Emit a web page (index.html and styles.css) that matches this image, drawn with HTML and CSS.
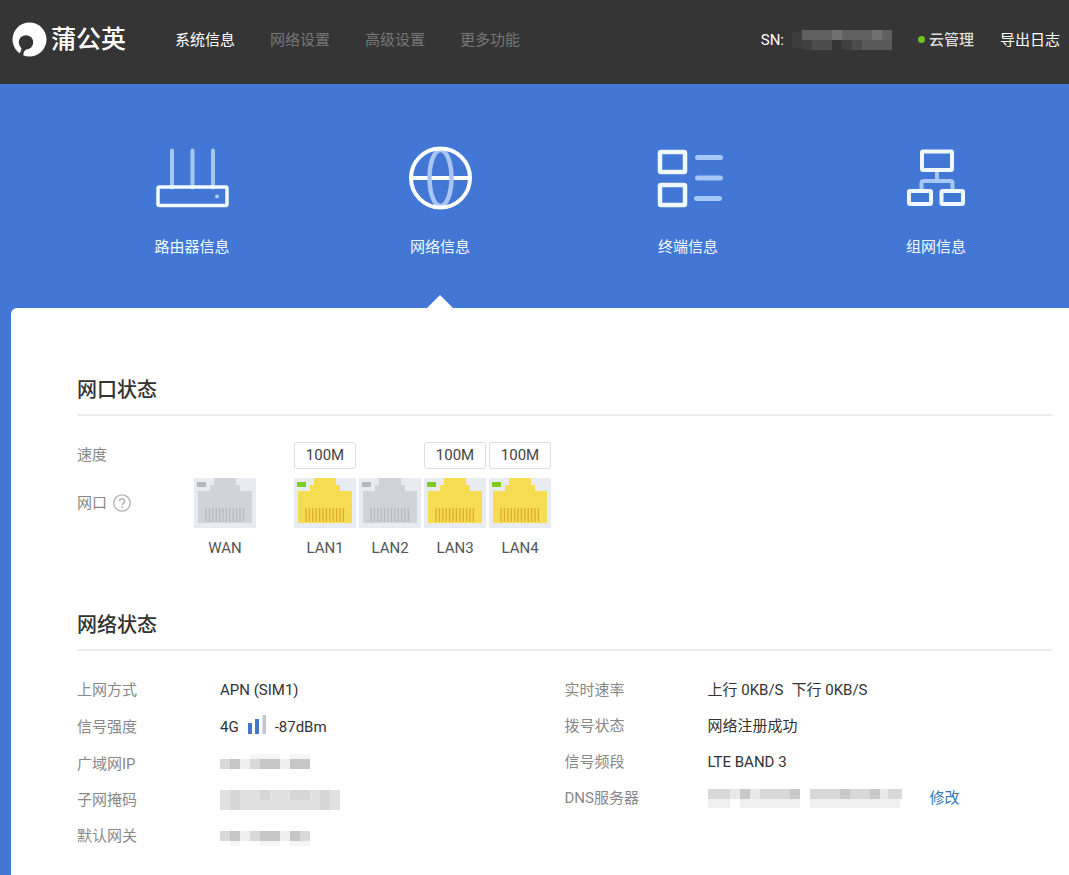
FILE: index.html
```html
<!DOCTYPE html>
<html lang="zh-CN">
<head>
<meta charset="utf-8">
<meta name="viewport" content="width=device-width, initial-scale=1">
<title>蒲公英</title>
<link rel="stylesheet" href="styles.css">
</head>
<body>
<header class="topbar">
  <a class="brand" href="#">
    <svg class="brand-mark" viewBox="0 0 34 34" aria-hidden="true">
      <circle cx="17" cy="17" r="16.5" fill="#fff"/>
      <circle cx="13.600" cy="19.800" r="7" fill="#353535"/>
      <path d="M9.500 24L14 26.500Q10.500 28.500 11 34L6 33Q9.500 28.500 9.500 24Z" fill="#353535"/>
    </svg>
    <span>蒲公英</span>
  </a>
  <nav class="menu">
    <a class="active" href="#">系统信息</a>
    <a href="#">网络设置</a>
    <a href="#">高级设置</a>
    <a href="#">更多功能</a>
  </nav>
  <div class="tools">
    <span class="serial">SN:
      <svg class="mosaic" width="100" height="20" viewBox="0 0 100 20" aria-hidden="true">
        <path d="M0 2h10v16H0z" fill="#3d3d3d"/>
        <path d="M10 10h10v10H10zM50 10h10v10H50z" fill="#404040"/>
        <path d="M10 0h90v10H10z" fill="#606060"/>
        <path d="M40 0h10v10H40zM80 0h10v10H80z" fill="#707070"/>
        <path d="M20 10h20v10H20zM60 10h10v10H60z" fill="#4c4c4c"/>
        <path d="M70 10h30v10H70z" fill="#595959"/>
      </svg>
    </span>
    <a class="cloud" href="#">云管理</a>
    <a class="export" href="#">导出日志</a>
  </div>
</header>

<nav class="tabs">
  <a class="tab" href="#">
    <svg width="80" height="70" viewBox="0 0 80 70" fill="none" aria-hidden="true">
      <path d="M20 7.500v37M40.500 7.500v37M61 7.500v37" stroke="#a4c8f4" stroke-width="4" stroke-linecap="round"/>
      <rect x="6" y="44" width="69" height="18.500" rx="1.500" stroke="#f4fcff" stroke-width="3.500"/>
      <circle cx="65" cy="53.500" r="2" fill="#a4d0f8"/>
    </svg>
    <span>路由器信息</span>
  </a>
  <a class="tab current" href="#">
    <svg width="80" height="70" viewBox="0 0 80 70" fill="none" aria-hidden="true">
      <path d="M11 35h59" stroke="#fff" stroke-width="4"/>
      <ellipse cx="40.500" cy="35" rx="11" ry="28" stroke="#a9c6f3" stroke-width="4.500"/>
      <circle cx="40.500" cy="35" r="29.500" stroke="#fff" stroke-width="4"/>
    </svg>
    <span>网络信息</span>
  </a>
  <a class="tab" href="#">
    <svg width="80" height="70" viewBox="0 0 80 70" fill="none" aria-hidden="true">
      <rect x="12" y="9" width="25" height="20" rx="1" stroke="#eff8ff" stroke-width="4.500"/>
      <rect x="12" y="42" width="25" height="20" rx="1" stroke="#eff8ff" stroke-width="4.500"/>
      <path d="M49.500 14.500h23M49.500 35h23M48.500 55.500h23" stroke="#a6c8f7" stroke-width="5" stroke-linecap="round"/>
    </svg>
    <span>终端信息</span>
  </a>
  <a class="tab" href="#">
    <svg width="80" height="70" viewBox="0 0 80 70" fill="none" aria-hidden="true">
      <path d="M41 29v9M25.500 46v-6q0-2 2-2h27q2 0 2 2v6" stroke="#a6c8f7" stroke-width="4"/>
      <rect x="26" y="8.500" width="30" height="18.500" rx="1" stroke="#eff8ff" stroke-width="4"/>
      <rect x="13" y="48" width="22" height="13" rx="1" stroke="#eff8ff" stroke-width="4"/>
      <rect x="45.500" y="48" width="21.500" height="13" rx="1" stroke="#eff8ff" stroke-width="4"/>
    </svg>
    <span>组网信息</span>
  </a>
</nav>

<svg width="0" height="0" class="defs" aria-hidden="true">
  <symbol id="port" viewBox="0 0 62 50">
    <path class="shell" d="M0 0h62v50H0z"/>
    <path class="jack" d="M20 0h22v7h4v6h12v32H4V13h12V7h4z"/>
    <path class="led" d="M3 4h9v5H3z"/>
    <path class="pins" d="M12 30v14M15.400 30v14M18.800 30v14M22.200 30v14M25.600 30v14M29 30v14M32.400 30v14M35.800 30v14M39.200 30v14M42.600 30v14M46 30v14M49.400 30v14"/>
  </symbol>
</svg>

<main class="panel">
  <section>
    <h2>网口状态</h2>
    <div class="ports">
      <div class="port-labels">
        <span>速度</span>
        <span class="with-help">网口
          <svg width="18" height="18" viewBox="0 0 18 18" fill="none" stroke="#b0b0b0" aria-hidden="true">
            <circle cx="9" cy="9" r="8.200" stroke-width="1.300"/>
            <path d="M6.400 7.200a2.600 2.400 0 1 1 4 2.100Q9 10.100 9 11.200" stroke-width="1.500"/>
            <path d="M9 12.400v1.600" stroke-width="1.600"/>
          </svg>
        </span>
      </div>
      <div class="port wan"><span class="speed none"></span><svg><use href="#port"/></svg><span>WAN</span></div>
      <div class="port on"><span class="speed">100M</span><svg><use href="#port"/></svg><span>LAN1</span></div>
      <div class="port"><span class="speed none"></span><svg><use href="#port"/></svg><span>LAN2</span></div>
      <div class="port on"><span class="speed">100M</span><svg><use href="#port"/></svg><span>LAN3</span></div>
      <div class="port on"><span class="speed">100M</span><svg><use href="#port"/></svg><span>LAN4</span></div>
    </div>
  </section>

  <section>
    <h2>网络状态</h2>
    <div class="status">
      <dl class="link">
        <dt>上网方式</dt><dd>APN (SIM1)</dd>
        <dt>信号强度</dt>
        <dd class="signal">4G
          <svg width="20" height="24" viewBox="0 0 20 24" aria-hidden="true">
            <path d="M1 8h4v11H1zM8 4h4v15H8z" fill="#4179c6"/><path d="M15.500 0h3.500v19h-3.500z" fill="#c3c5cb"/>
          </svg>
          -87dBm</dd>
        <dt>广域网IP</dt>
        <dd><svg class="mosaic" width="90" height="20" viewBox="0 0 90 20" aria-hidden="true">
          <path d="M0 5h90v10H0z" fill="#d9d9d9"/><path d="M10 5h10v10H10zM40 5h20v10H40zM70 5h20v10H70z" fill="#c6c6c6"/><path d="M20 5h10v10H20zM60 5h10v10H60z" fill="#eee"/><path d="M30 0h30v5H30zM70 0h20v5H70z" fill="#f5f5f5"/>
        </svg></dd>
        <dt>子网掩码</dt>
        <dd><svg class="mosaic" width="120" height="20" viewBox="0 0 120 20" aria-hidden="true">
          <path d="M0 0h120v20H0z" fill="#e0e0e0"/><path d="M10 0h10v20H10zM40 0h10v10H40zM70 0h20v10H70zM100 0h10v20H100z" fill="#d6d6d6"/>
        </svg></dd>
        <dt>默认网关</dt>
        <dd><svg class="mosaic" width="90" height="20" viewBox="0 0 90 20" aria-hidden="true">
          <path d="M0 5h90v10H0z" fill="#d9d9d9"/><path d="M10 5h10v10H10zM40 5h20v10H40zM70 5h10v10H70z" fill="#c6c6c6"/><path d="M20 5h10v10H20zM60 5h10v10H60z" fill="#eee"/><path d="M10 15h10v5H10zM40 15h20v5H40zM70 15h20v5H70z" fill="#f5f5f5"/>
        </svg></dd>
      </dl>
      <dl>
        <dt>实时速率</dt><dd class="rates"><span>上行 0KB/S</span><span>下行 0KB/S</span></dd>
        <dt>拨号状态</dt><dd>网络注册成功</dd>
        <dt>信号频段</dt><dd>LTE BAND 3</dd>
        <dt>DNS服务器</dt>
        <dd class="dns"><svg class="mosaic" width="196" height="20" viewBox="0 0 196 20" aria-hidden="true">
          <path d="M0 1h92v10H0zM102 1h92v10H102z" fill="#d8d8d8"/><path d="M32 1h10v10H32zM82 1h10v10H82zM132 1h10v10H132zM162 1h10v10H162z" fill="#c8c8c8"/><path d="M22 1h10v10H22zM42 1h10v10H42zM172 1h8v10h-8z" fill="#e8e8e8"/><path d="M0 11h22v9H0zM32 11h60v9H32zM102 11h90v9H102z" fill="#f0f0f0"/>
        </svg><a href="#">修改</a></dd>
      </dl>
    </div>
  </section>
</main>
</body>
</html>
```
FILE: styles.css
```css
* { box-sizing: border-box; }

body {
  margin: 0;
  min-height: 100vh;
  display: flex;
  flex-direction: column;
  background: #4277d5;
  color: #333;
  font-family: Roboto, "Noto Sans CJK SC", sans-serif;
  font-size: 15px;
  line-height: 24px;
}

a { color: inherit; text-decoration: none; }
svg { flex: none; display: block; }
.defs { position: absolute; }
.mosaic { shape-rendering: crispEdges; }

.topbar {
  display: flex;
  align-items: center;
  height: 84px;
  padding: 0 9px 5px 12px;
  background: #353535;
  color: #fff;
}

.brand {
  display: flex;
  align-items: center;
  gap: 4px;
  font-size: 25px;
  font-weight: 500;
  line-height: 34px;
}
.brand-mark { width: 35px; height: 35px; }

.menu { display: flex; gap: 35px; margin-left: 49px; color: #777; }
.menu .active { color: #fff; }

.tools { display: flex; align-items: center; margin-left: auto; }
.serial { display: flex; align-items: center; gap: 8px; }
.cloud {
  display: flex;
  align-items: center;
  gap: 4px;
  margin: 0 26px;
  color: #ddd;
  font-weight: 500;
}
.cloud::before {
  content: "";
  width: 7px;
  height: 7px;
  border-radius: 50%;
  background: #6cc41e;
}

.tabs {
  display: grid;
  grid-template-columns: repeat(4, 1fr);
  height: 224px;
  padding: 59px 9px 0 68px;
  color: #f0fbff;
}
.tab {
  position: relative;
  display: flex;
  flex-direction: column;
  align-items: center;
  gap: 22px;
}
.tab.current::after {
  content: "";
  position: absolute;
  bottom: 0;
  border: 13px solid transparent;
  border-top: 0;
  border-bottom-color: #fff;
}

.panel {
  flex: 1;
  margin-left: 11px;
  padding: 67px 17px 26px 66px;
  border-top-left-radius: 6px;
  background: #fff;
}

h2 {
  margin: 0;
  padding-bottom: 9px;
  border-bottom: 2px solid #ebebeb;
  font-size: 20px;
  font-weight: 500;
  line-height: 30px;
}

.ports { display: flex; gap: 3px; padding: 26px 0 50px; }
.port-labels {
  display: flex;
  flex-direction: column;
  gap: 24px;
  width: 114px;
  padding-top: 1px;
  color: #888;
}
.with-help { display: flex; align-items: center; gap: 6px; }
.port {
  display: flex;
  flex-direction: column;
  align-items: center;
  width: 62px;
  color: #555;
}
.port.wan { margin-right: 35px; }
.port svg { width: 62px; height: 50px; margin: 9px 0 8px; }
.speed {
  width: 62px;
  height: 27px;
  border: 1px solid #ddd;
  border-radius: 3px;
  text-align: center;
  color: #444;
}
.speed.none { border-color: transparent; }

.shell { fill: #e9ebf2; }
.jack { fill: var(--jack, #d2d3da); }
.led { fill: var(--led, #b8b9be); }
.pins { stroke: var(--pins, #b9bac0); stroke-width: 1.4; }
.on { --jack: #f6dc50; --led: #7fcb1c; --pins: #dfae2e; }

.status { display: grid; grid-template-columns: 1fr 1fr; padding-top: 21px; }
dl {
  display: grid;
  grid-template-columns: 143px 1fr;
  grid-auto-rows: 36px;
  align-items: center;
  align-content: start;
  margin: 0;
}
.link { grid-template-rows: 36px 38px; }
dt { color: #888; }
dd { margin: 0; display: flex; align-items: center; }
.signal { gap: 8px; }
.rates { gap: 8px; }
.dns { gap: 26px; }
.dns a { color: #3277b8; }
```
